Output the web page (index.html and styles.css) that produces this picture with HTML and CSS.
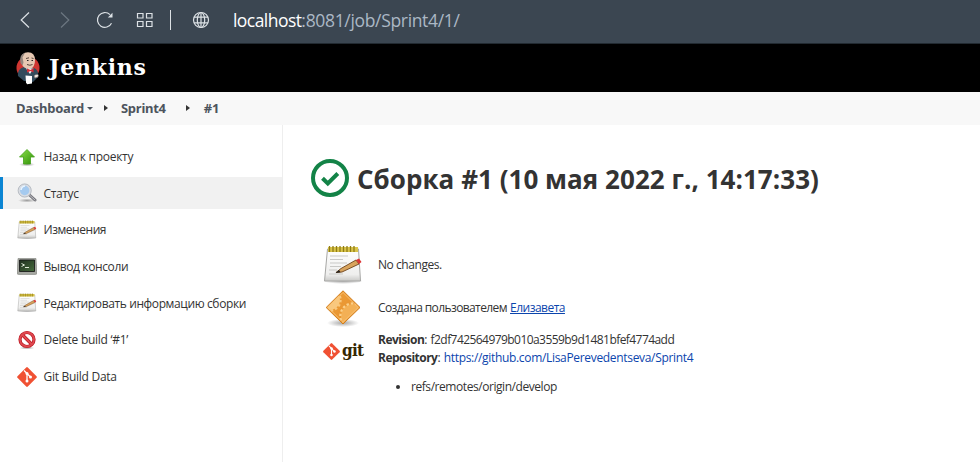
FILE: index.html
```html
<!DOCTYPE html>
<html lang="ru">
<head>
<meta charset="utf-8">
<title>Sprint4 #1 [Jenkins]</title>
<link rel="stylesheet" href="styles.css">
</head>
<body>
<svg width="0" height="0" class="defs" aria-hidden="true">
  <defs>
    <linearGradient id="paper" x1="0" y1="0" x2="0" y2="1"><stop offset="0" stop-color="#fff"/><stop offset=".8" stop-color="#eeeeed"/><stop offset="1" stop-color="#c9c9c7"/></linearGradient>
    <linearGradient id="green" x1="0" y1="0" x2="1" y2="1"><stop offset="0" stop-color="#8be04a"/><stop offset="1" stop-color="#2f8f08"/></linearGradient>
    <linearGradient id="orange" x1="0" y1="0" x2="1" y2="1"><stop offset="0" stop-color="#f0a03a"/><stop offset="1" stop-color="#e38e2c"/></linearGradient>
    <linearGradient id="screen" x1="0" y1="0" x2="1" y2="1"><stop offset="0" stop-color="#203020"/><stop offset="1" stop-color="#466b3c"/></linearGradient>
    <radialGradient id="shade"><stop offset="0" stop-color="#000" stop-opacity=".35"/><stop offset="1" stop-color="#000" stop-opacity="0"/></radialGradient>
    <clipPath id="diamond"><path d="M20 3.500 36 19.500 20 35 4 19.500z"/></clipPath>
    <symbol id="notepad" viewBox="0 0 40 40">
      <ellipse cx="20" cy="36" rx="20" ry="3" fill="url(#shade)"/>
      <path d="M4.500 4h31l2 32H1.500z" fill="url(#paper)" stroke="#a7a7a5"/>
      <path d="M5 2h30v5H5z" fill="#d9c449"/>
      <path d="M6.500 1v6M10 1v6M13.500 1v6M17 1v6M20.500 1v6M24 1v6M27.500 1v6M31 1v6" stroke="#8f7b16" stroke-width="1.300"/>
      <path d="M7 11h18M7 14.500h13M7 18h17M7 21.500h11M6 25h8M6 29h14" stroke="#c9c9c7"/>
      <path d="M13 27.500l5-4L33 15l3 4L19 27z" fill="#d8a35c" stroke="#6d431b" stroke-width=".9"/>
      <path d="M33 15l3-1.500 2.500 3.500L36 19z" fill="#dc3434"/>
      <path d="M12.500 28l3.500-3 1.500 2.200z" fill="#222"/>
    </symbol>
    <symbol id="git" viewBox="0 0 20 20">
      <path d="M9.200.5 .5 9.200q-.8.8 0 1.600l8.700 8.700q.8.8 1.600 0l8.700-8.700q.8-.8 0-1.600L10.800.5Q10 -.3 9.200.5z" fill="#f05133"/>
      <path d="M7 3.500l3 3v7.500M10 6.500l3.500 3.500" fill="none" stroke="#fff" stroke-width="1.300"/>
      <circle cx="10" cy="6.500" r="1.500" fill="#fff"/><circle cx="10" cy="14" r="1.500" fill="#fff"/><circle cx="13.500" cy="10" r="1.500" fill="#fff"/>
    </symbol>
  </defs>
</svg>

<div class="browser">
  <svg class="nav back" width="10" height="18" viewBox="0 0 10 18"><path d="M9 1.500 1.200 9 9 16.500"/></svg>
  <svg class="nav forward" width="10" height="18" viewBox="0 0 10 18"><path d="M1 1.500 8.800 9 1 16.500"/></svg>
  <svg class="nav reload" width="18" height="18" viewBox="0 0 18 18"><path d="M15.500 12.200A7.400 7.400 0 1 1 14 3.600"/><path d="M16.500 1.800v4.700h-4.700z" class="solid"/></svg>
  <svg class="nav tiles" width="18" height="16" viewBox="0 0 18 16"><path d="M1.500 1.500h5.500v4.500h-5.500zM10.500 1.500h5.500v4.500h-5.500zM1.500 9.500h5.500v5h-5.500zM10.500 9.500h5.500v5h-5.500z"/></svg>
  <span class="divider"></span>
  <svg class="nav globe" width="18" height="18" viewBox="0 0 18 18"><circle cx="9" cy="9" r="7.500"/><ellipse cx="9" cy="9" rx="3.700" ry="7.500"/><path d="M9 1.500v15M2 6.200h14M2 11.800h14"/></svg>
  <div class="url"><span class="host">localhost</span>:8081/job/Sprint4/1/</div>
</div>

<header class="header">
  <svg class="mascot" width="24" height="34" viewBox="0 0 24 34">
    <circle cx="12" cy="17" r="11.500" fill="#cf3631"/>
    <path d="M2 25Q1 18 8 16l10 1q5 2 4 9l-5 5-9-1z" fill="#334b5c"/>
    <path d="M5 9Q5 1.500 12 1.200q7 .3 7 7.800 0 7.500-5 9Q7 18 5.500 12z" fill="#e6c8b2"/>
    <path d="M4.500 12Q2.500 4 9 1.800L6.500 6.500l1 5-1 3z" fill="#94867d"/>
    <path d="M10 7.500l3-.7M15.500 7l2 .5M11 13.500q3 1.500 5.500 0" stroke="#56443b" fill="none"/>
    <path d="M11 9.500h1.500M15.500 9.500h1.500" stroke="#222" stroke-width="1.200"/>
    <path d="M10 17.500l4 5.500 3.500-5.500z" fill="#eee"/>
    <path d="M11 17.500l3.500 1.500 3-2v4.500l-3-1.500-3.500 1.500z" fill="#d42c36"/>
    <path d="M9.500 24.500l6.500.5v7.500l-5 .7-1-2z" fill="#fff"/>
    <path d="M18 24.500q4-2.500 4.500 0 0 2.500-4 2.500z" fill="#eee3dc" stroke="#444" stroke-width=".5"/>
  </svg>
  <span class="brand">Jenkins</span>
</header>

<nav class="crumbs">
  <span class="crumb c-dash">Dashboard</span><i class="caret"></i><i class="sep s1"></i>
  <span class="crumb c-job">Sprint4</span><i class="sep s2"></i><span class="crumb">#1</span>
</nav>

<div class="page">
  <aside class="side">
    <a class="task"><svg width="20" height="20" viewBox="0 0 20 20"><ellipse cx="10" cy="17.500" rx="8" ry="2" fill="url(#shade)"/><path d="M10 2.500 17.500 10H13.500v7h-7v-7h-4z" fill="url(#green)" stroke="#41a018" stroke-width=".8"/></svg><span class="t1">Назад к проекту</span></a>
    <a class="task active"><svg width="20" height="20" viewBox="0 0 20 20"><ellipse cx="10" cy="17.500" rx="9" ry="2" fill="url(#shade)"/><path d="M12.500 12l5.500 5" stroke="#77777d" stroke-width="3" stroke-linecap="round"/><path d="M12.500 12l5.500 5" stroke="#bbbbc2" stroke-linecap="round"/><circle cx="7.700" cy="7.500" r="5.700" fill="#a5caef" stroke="#d9dce2" stroke-width="2"/><circle cx="7.700" cy="7.500" r="6.600" fill="none" stroke="#9ca2ab" stroke-width=".6"/><path d="M4 7q.5-3.500 4-4" stroke="#e9f5ff" stroke-width="1.500" fill="none"/></svg><span class="t2">Статус</span></a>
    <a class="task"><svg width="20" height="20"><use href="#notepad"/></svg><span class="t3">Изменения</span></a>
    <a class="task"><svg width="20" height="20" viewBox="0 0 20 20"><path d="M1 1.500h18l1 14.500q0 1.500-2 1.500H2q-2 0-2-1.500z" fill="#a6a8a2" stroke="#73756f" stroke-width=".5"/><path d="M2.500 3h15v11.500h-15z" fill="url(#screen)" stroke="#111" stroke-width=".8"/><path d="M4.500 6.500 7.500 8l-3 1.500M8 10.500h4" stroke="#dfead9" fill="none"/></svg><span class="t4">Вывод консоли</span></a>
    <a class="task"><svg width="20" height="20"><use href="#notepad"/></svg><span class="t5">Редактировать информацию сборки</span></a>
    <a class="task"><svg width="20" height="20" viewBox="0 0 20 20"><ellipse cx="10" cy="18" rx="8" ry="1.500" fill="url(#shade)"/><circle cx="10" cy="9.500" r="7" fill="#fff" stroke="#b91620" stroke-width="3.200"/><path d="M5 4.500l10 10" stroke="#b91620" stroke-width="3.200"/><circle cx="10" cy="9.500" r="7" fill="none" stroke="#df4950" stroke-width="1.800"/><path d="M5 4.500l10 10" stroke="#df4950" stroke-width="1.800"/></svg><span class="t6">Delete build ‘#1’</span></a>
    <a class="task"><svg width="20" height="20"><use href="#git"/></svg><span class="t7">Git Build Data</span></a>
  </aside>

  <main class="main">
    <h1><svg width="38" height="38" viewBox="0 0 38 38"><circle cx="19" cy="19" r="17" fill="none" stroke="#138347" stroke-width="4"/><path d="M11.500 19.300l5.300 5.200 10-10" fill="none" stroke="#138347" stroke-width="4"/></svg><span>Сборка #1 (10 мая 2022 г., 14:17:33)</span></h1>
    <div class="row changes"><svg width="40" height="40"><use href="#notepad"/></svg><p class="nochg">No changes.</p></div>
    <div class="row cause"><svg width="40" height="40" viewBox="0 0 40 40">
      <ellipse cx="20" cy="35" rx="16" ry="4" fill="url(#shade)"/>
      <path d="M20 2.800 37 19.500 20 36 3.200 19.500z" fill="url(#orange)" stroke="#d17d1b" stroke-linejoin="round"/>
      <g clip-path="url(#diamond)">
        <circle cx="7" cy="12" r="10" fill="#f9c87e"/>
        <circle cx="7" cy="12" r="10.500" fill="none" stroke="#f9c87e" stroke-width="2.400" stroke-dasharray="2.400 2"/>
        <circle cx="30" cy="28" r="12" fill="#f3b055"/>
        <circle cx="30" cy="28" r="12.700" fill="none" stroke="#fbd08a" stroke-width="2.200" stroke-dasharray="2.400 2"/>
      </g>
      <path d="M20 4.500 35.200 19.500 20 34.300 5 19.500z" fill="none" stroke="#fbc57a" stroke-width=".8"/>
    </svg><p><span class="by">Создана пользователем</span> <a class="user">Елизавета</a></p></div>
    <div class="row scm">
      <div class="gitlogo"><svg width="17" height="17" viewBox="0 0 20 20"><use href="#git" width="20" height="20"/></svg><span>git</span></div>
      <div class="info">
        <p><b class="rev">Revision</b>: <span class="hash">f2df742564979b010a3559b9d1481bfef4774add</span></p>
        <p><b class="repo">Repository</b>: <a class="link">https://github.com/LisaPerevedentseva/Sprint4</a></p>
        <ul><li>refs/remotes/origin/develop</li></ul>
      </div>
    </div>
  </main>
</div>
</body>
</html>
```
FILE: styles.css
```css
* { box-sizing: border-box; }
body { margin: 0; width: 980px; height: 462px; overflow: hidden; background: #fff; color: #333; font: 12px/18px "Open Sans", "Noto Sans", sans-serif; }
svg { display: block; flex: none; }
p { margin: 0; white-space: nowrap; }
.defs { position: absolute; }

.browser { height: 44px; padding: 0 0 4px 20px; display: flex; align-items: center; background: #3b4651; border-bottom: 1px solid #222a31; }
.nav { fill: none; stroke: #dce1e5; stroke-width: 1.200; }
.nav .solid { fill: #dce1e5; stroke: none; }
.nav.forward { margin-left: 30px; stroke: #6c7781; }
.reload { margin-left: 26px; }
.tiles { margin-left: 22px; }
.divider { width: 1px; height: 20px; margin-left: 16px; background: #dce1e5; }
.globe { margin-left: 21px; }
.url { margin-left: 23px; color: #abb8c5; font-size: 17.500px; line-height: 26px; letter-spacing: -.33px; white-space: nowrap; }
.host { color: #fff; letter-spacing: -.55px; }

.header { height: 48px; padding-left: 16px; display: flex; align-items: center; background: #000; }
.brand { margin: -3px 0 0 9px; color: #fff; font: bold 22px/30px "DejaVu Serif", serif; letter-spacing: .75px; }

.crumbs { height: 33px; padding: 0 0 2px 16px; display: flex; align-items: center; background: #f8f8f8; color: #4d545d; font: bold 13px/18px "Noto Sans", sans-serif; letter-spacing: -.25px; }
.caret { margin: 1px 0 0 3px; border: 3.500px solid transparent; border-top-color: #4d545d; border-bottom: 0; }
.sep { border: 3px solid transparent; border-left: 4px solid #333; border-right: 0; }
.s1 { margin: 0 13px 0 11px; }
.s2 { margin: 0 14px 0 20px; }

.page { display: flex; height: 337px; }
.side { width: 283px; padding-top: 15px; border-right: 1px solid #eee; }
.task { height: 32px; margin-bottom: 4.700px; padding-left: 17px; display: flex; align-items: center; gap: 6.500px; font-weight: 500; letter-spacing: -.38px; white-space: nowrap; }
.task span { padding-top: 2px; }
.task svg { margin-top: 1px; }
.task.active { background: #f1f1f1; border-left: 3px solid #0b85d3; padding-left: 14px; }
.t1, .t6, .t7 { letter-spacing: -.28px; }
.t3 { letter-spacing: -.46px; }

.main { flex: 1; padding: 34px 0 0 28px; }
h1 { margin: 0; display: flex; align-items: center; gap: 8px; height: 38px; font-size: 26px; line-height: 38px; letter-spacing: .04px; white-space: nowrap; }
h1 span { padding-top: 2px; }
.row { display: flex; align-items: center; padding-left: 12px; gap: 15px; }
.changes { height: 40px; margin-top: 48px; }
.cause { height: 40px; margin-top: 3px; }
.nochg, li { letter-spacing: -.44px; }
.by { letter-spacing: -.6px; }
.user, .rev { letter-spacing: -.52px; }
.hash { letter-spacing: -.56px; }
.repo { letter-spacing: -.52px; }
.link { letter-spacing: -.32px; }
.scm { align-items: flex-start; gap: 14px; margin-top: 3px; }
.gitlogo { width: 41px; display: flex; align-items: center; gap: 2px; height: 34px; margin-top: 3px; color: #362701; }
.gitlogo span { margin-top: -3px; font: bold 17px/24px "DejaVu Serif Condensed", "DejaVu Serif", serif; font-stretch: condensed; letter-spacing: -.8px; }
.user, .link { color: #0b45ad; }
.user { text-decoration: underline; }
ul { margin: 11px 0 0; padding-left: 33px; }
```
